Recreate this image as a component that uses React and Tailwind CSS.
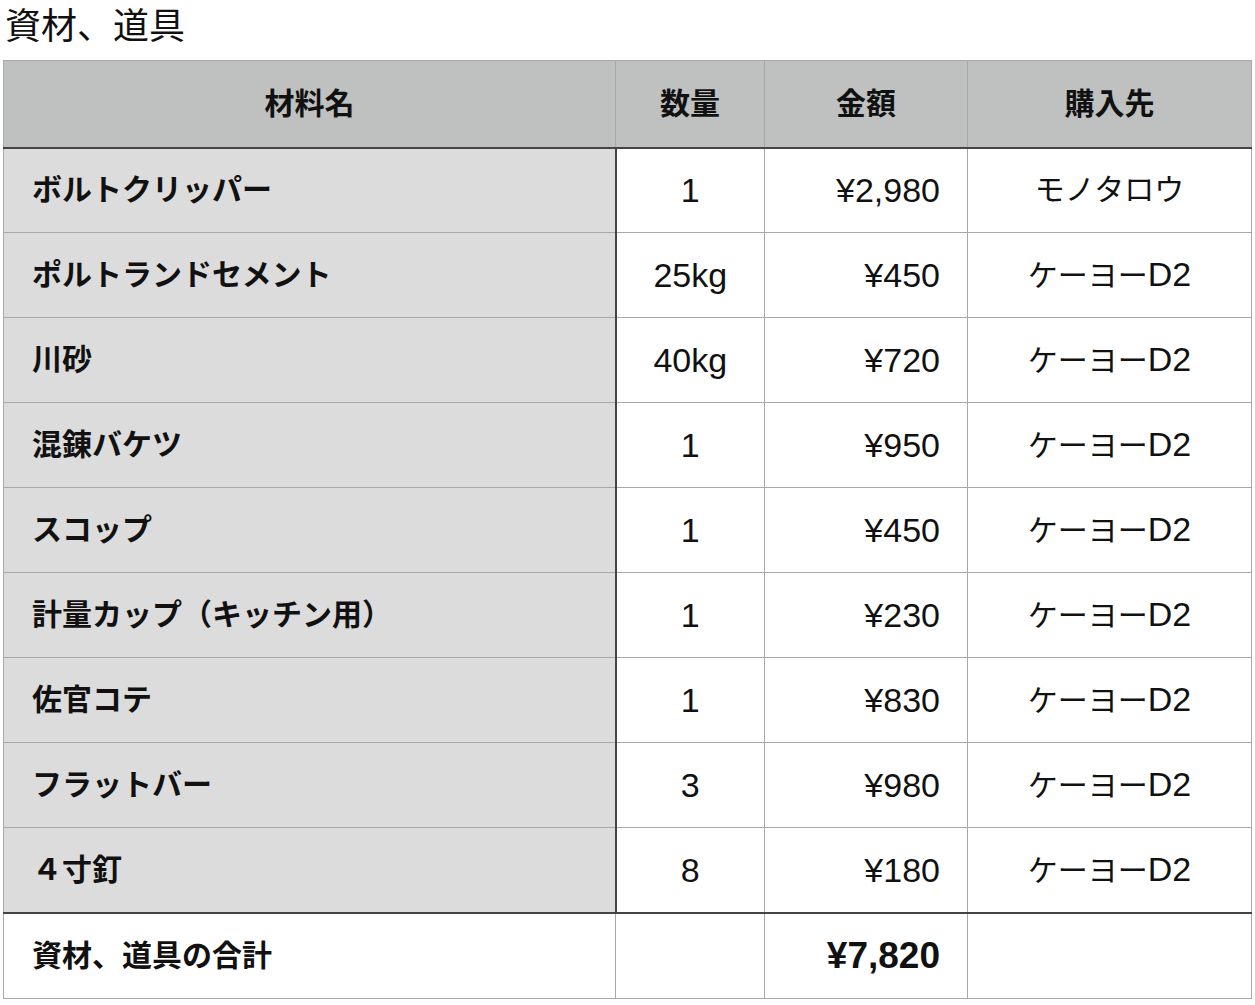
import React from 'react';

const rows = [
  { name: 'ボルトクリッパー', qty: '1', price: '¥2,980', shop: 'モノタロウ', code: '' },
  { name: 'ポルトランドセメント', qty: '25kg', price: '¥450', shop: 'ケーヨー', code: 'D2' },
  { name: '川砂', qty: '40kg', price: '¥720', shop: 'ケーヨー', code: 'D2' },
  { name: '混錬バケツ', qty: '1', price: '¥950', shop: 'ケーヨー', code: 'D2' },
  { name: 'スコップ', qty: '1', price: '¥450', shop: 'ケーヨー', code: 'D2' },
  { name: '計量カップ（キッチン用）', qty: '1', price: '¥230', shop: 'ケーヨー', code: 'D2' },
  { name: '佐官コテ', qty: '1', price: '¥830', shop: 'ケーヨー', code: 'D2' },
  { name: 'フラットバー', qty: '3', price: '¥980', shop: 'ケーヨー', code: 'D2' },
  { name: '４寸釘', qty: '8', price: '¥180', shop: 'ケーヨー', code: 'D2' },
];

const font = { fontFamily: '"Liberation Sans", "Noto Sans CJK JP", sans-serif' };

const App = () => {
  return (
    <div className="bg-white text-[#111] pl-[3px]" style={font}>
      <h1 className="pl-[2px] text-[36px] leading-[54px] h-[60px] font-normal">資材、道具</h1>
      <table className="border-collapse table-fixed w-[1248px] text-[30px] leading-[40px]">
        <colgroup>
          <col className="w-[612px]" />
          <col className="w-[149px]" />
          <col className="w-[203px]" />
          <col className="w-[284px]" />
        </colgroup>
        <thead>
          <tr className="h-[87px] bg-[#bfc1c0]">
            <th className="border border-[#a8a8a8] border-b-2 border-b-[#444] font-bold text-center">材料名</th>
            <th className="border border-[#a8a8a8] border-b-2 border-b-[#444] font-bold text-center">数量</th>
            <th className="border border-[#a8a8a8] border-b-2 border-b-[#444] font-bold text-center">金額</th>
            <th className="border border-[#a8a8a8] border-b-2 border-b-[#444] font-bold text-center">購入先</th>
          </tr>
        </thead>
        <tbody>
          {rows.map((row, i) => (
            <tr key={i} className="h-[85px]">
              <td className="border border-[#a8a8a8] border-r-2 border-r-[#444] bg-[#dcdcdc] font-bold pl-[28px]">{row.name}</td>
              <td className="border border-[#a8a8a8] text-center text-[34px]">{row.qty}</td>
              <td className="border border-[#a8a8a8] text-right pr-[27px] text-[34px]">{row.price}</td>
              <td className="border border-[#a8a8a8] text-center">
                {row.shop}
                {row.code && <span className="text-[34px]">{row.code}</span>}
              </td>
            </tr>
          ))}
          <tr className="h-[86px]">
            <td className="border border-[#a8a8a8] border-t-2 border-t-[#444] font-bold pl-[28px]">資材、道具の合計</td>
            <td className="border border-[#a8a8a8] border-t-2 border-t-[#444]"></td>
            <td className="border border-[#a8a8a8] border-t-2 border-t-[#444] text-right pr-[27px] font-bold text-[37px]">¥7,820</td>
            <td className="border border-[#a8a8a8] border-t-2 border-t-[#444]"></td>
          </tr>
        </tbody>
      </table>
    </div>
  );
};

export default App;
